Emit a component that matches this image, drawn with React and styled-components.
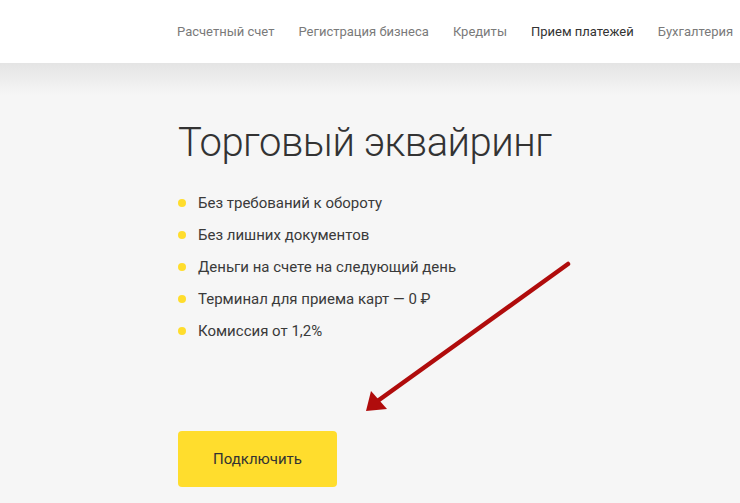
import styled, { createGlobalStyle } from "styled-components";

const GlobalStyle = createGlobalStyle`
  html, body {
    margin: 0;
    padding: 0;
    background: #f6f6f6;
    font-family: Roboto, "Noto Sans", "Liberation Sans", sans-serif;
  }
`;

const NAV = [
  { label: "Расчетный счет" },
  { label: "Регистрация бизнеса" },
  { label: "Кредиты" },
  { label: "Прием платежей", active: true },
  { label: "Бухгалтерия" },
];

const FEATURES = [
  "Без требований к обороту",
  "Без лишних документов",
  "Деньги на счете на следующий день",
  "Терминал для приема карт — 0 ₽",
  "Комиссия от 1,2%",
];

export default function App() {
  return (
    <>
      <GlobalStyle />
      <Page>
        <Header>
          <Nav>
            {NAV.map((item) => (
              <NavLink key={item.label} $active={item.active}>
                {item.label}
              </NavLink>
            ))}
          </Nav>
        </Header>
        <Hero>
          <Title>Торговый эквайринг</Title>
          <List>
            {FEATURES.map((f) => (
              <Item key={f}>{f}</Item>
            ))}
          </List>
          <Button>Подключить</Button>
          <Arrow viewBox="0 0 740 503" aria-hidden="true">
            <line
              x1="568"
              y1="264"
              x2="372"
              y2="405"
              stroke="#b00c0c"
              strokeWidth="4.5"
              strokeLinecap="round"
            />
            <polygon points="366,411 371,391 387,409" fill="#b00c0c" />
          </Arrow>
        </Hero>
      </Page>
    </>
  );
}

const Page = styled.div`
  width: 740px;
  height: 503px;
  overflow: hidden;
  background: #f6f6f6;
`;

const Header = styled.header`
  height: 63px;
  background: #fff;
  display: flex;
  align-items: center;
  padding-left: 177px;
`;

const Nav = styled.nav`
  display: flex;
  gap: 24px;
  white-space: nowrap;
  padding-bottom: 1px;
`;

const NavLink = styled.a`
  font-size: 13px;
  color: ${(p) => (p.$active ? "#333333" : "#7a7a7a")};
  cursor: pointer;
`;

const Hero = styled.section`
  position: relative;
  height: 440px;
  padding: 56px 0 0 178px;
  box-sizing: border-box;
  background: linear-gradient(#e4e4e4 0px, #f6f6f6 32px);
`;

const Title = styled.h1`
  margin: 0;
  font-size: 40px;
  font-weight: 300;
  color: #333333;
  line-height: 48px;
  letter-spacing: -0.5px;
`;

const List = styled.ul`
  list-style: none;
  margin: 26px 0 0;
  padding: 0;
  display: flex;
  flex-direction: column;
  gap: 12px;
`;

const Item = styled.li`
  display: flex;
  align-items: center;
  gap: 12px;
  font-size: 15px;
  line-height: 20px;
  color: #3a3a3a;

  &::before {
    content: "";
    width: 8px;
    height: 8px;
    border-radius: 50%;
    background: #ffdd2d;
  }
`;

const Button = styled.button`
  display: block;
  margin-top: 90px;
  width: 159px;
  height: 56px;
  border: none;
  border-radius: 4px;
  background: #ffdd2d;
  color: #333333;
  font-family: inherit;
  font-size: 15px;
  cursor: pointer;
`;

const Arrow = styled.svg`
  position: absolute;
  left: 0;
  top: -63px;
  width: 740px;
  height: 503px;
  pointer-events: none;
`;
